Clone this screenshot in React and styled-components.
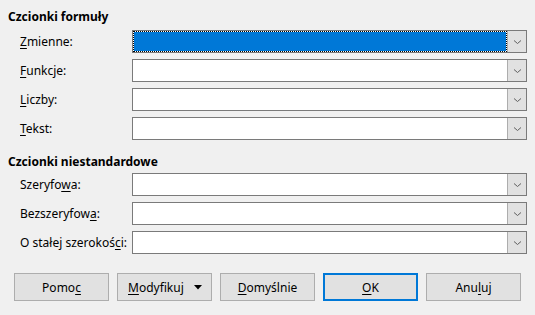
import React from "react";
import styled, { createGlobalStyle } from "styled-components";

const GlobalStyle = createGlobalStyle`
  html, body {
    margin: 0;
    padding: 0;
    background: #f0f0f0;
  }
  body {
    font-family: "Noto Sans", "Open Sans", sans-serif;
    font-size: 12px;
    color: #000;
  }
`;

const Dialog = styled.div`
  width: 535px;
  height: 315px;
  box-sizing: border-box;
  padding: 8px 8px 0 8px;
  background: #f0f0f0;
  display: flex;
  flex-direction: column;
`;

const Heading = styled.div`
  font-weight: bold;
  height: 18px;
  line-height: 18px;
  margin-top: ${(p) => p.$top || 0}px;
  margin-bottom: ${(p) => p.$bottom || 0}px;
`;

const Rows = styled.div`
  display: flex;
  flex-direction: column;
  gap: 6px;
`;

const Row = styled.div`
  display: grid;
  grid-template-columns: 112px 395px;
  align-items: center;
  padding-left: 12px;
  height: 23px;
`;

const Label = styled.span`
  white-space: nowrap;
`;

const Key = styled.span`
  text-decoration: underline;
  text-underline-offset: 2px;
`;

const Combo = styled.div`
  display: flex;
  height: 23px;
  box-sizing: border-box;
  border: 1px solid #7a7a7a;
  background: #fff;
`;

const Field = styled.div`
  flex: 1;
  box-sizing: border-box;
  background: ${(p) => (p.$focused ? "#0078d7" : "#fff")};
  background-clip: padding-box;
  border: 1px ${(p) => (p.$focused ? "dotted #000" : "solid transparent")};
`;

const DropButton = styled.div`
  width: 18px;
  display: flex;
  align-items: center;
  justify-content: center;
  background: #e1e1e1;
  border-left: 1px solid #adadad;
`;

const ButtonBar = styled.div`
  display: flex;
  gap: 8px;
  margin-top: 19px;
  padding-left: 6px;
`;

const Button = styled.div`
  width: 95px;
  height: 28px;
  box-sizing: border-box;
  display: flex;
  align-items: center;
  justify-content: ${(p) => (p.$menu ? "space-between" : "center")};
  padding: ${(p) => (p.$menu ? "0 9px 0 10px" : "0")};
  background: #e1e1e1;
  border: ${(p) => (p.$default ? "2px solid #0078d7" : "1px solid #adadad")};
`;

const Chevron = () => (
  <svg width="9" height="6" viewBox="0 0 9 6">
    <path d="M1 1.5 L4.5 4.5 L8 1.5" fill="none" stroke="#606060" strokeWidth="1" />
  </svg>
);

const MenuArrow = () => (
  <svg width="8" height="5" viewBox="0 0 8 5">
    <path d="M0 0 H8 L4 4.5 Z" fill="#000" />
  </svg>
);

const ComboRow = ({ label, focused }) => (
  <Row>
    <Label>{label}</Label>
    <Combo>
      <Field $focused={focused} />
      <DropButton>
        <Chevron />
      </DropButton>
    </Combo>
  </Row>
);

export default function App() {
  return (
    <>
      <GlobalStyle />
      <Dialog>
        <Heading $bottom={4}>Czcionki formuły</Heading>
        <Rows>
          <ComboRow focused label={<><Key>Z</Key>mienne:</>} />
          <ComboRow label={<><Key>F</Key>unkcje:</>} />
          <ComboRow label={<><Key>L</Key>iczby:</>} />
          <ComboRow label={<><Key>T</Key>ekst:</>} />
        </Rows>
        <Heading $top={13} $bottom={2}>Czcionki niestandardowe</Heading>
        <Rows>
          <ComboRow label={<>Szeryfo<Key>w</Key>a:</>} />
          <ComboRow label={<>Bezszeryfow<Key>a</Key>:</>} />
          <ComboRow label={<>O stałej szerokoś<Key>c</Key>i:</>} />
        </Rows>
        <ButtonBar>
          <Button>Pomo<Key>c</Key></Button>
          <Button $menu>
            <span><Key>M</Key>odyfikuj</span>
            <MenuArrow />
          </Button>
          <Button><Key>D</Key>omyślnie</Button>
          <Button $default><Key>O</Key>K</Button>
          <Button>Anu<Key>l</Key>uj</Button>
        </ButtonBar>
      </Dialog>
    </>
  );
}
